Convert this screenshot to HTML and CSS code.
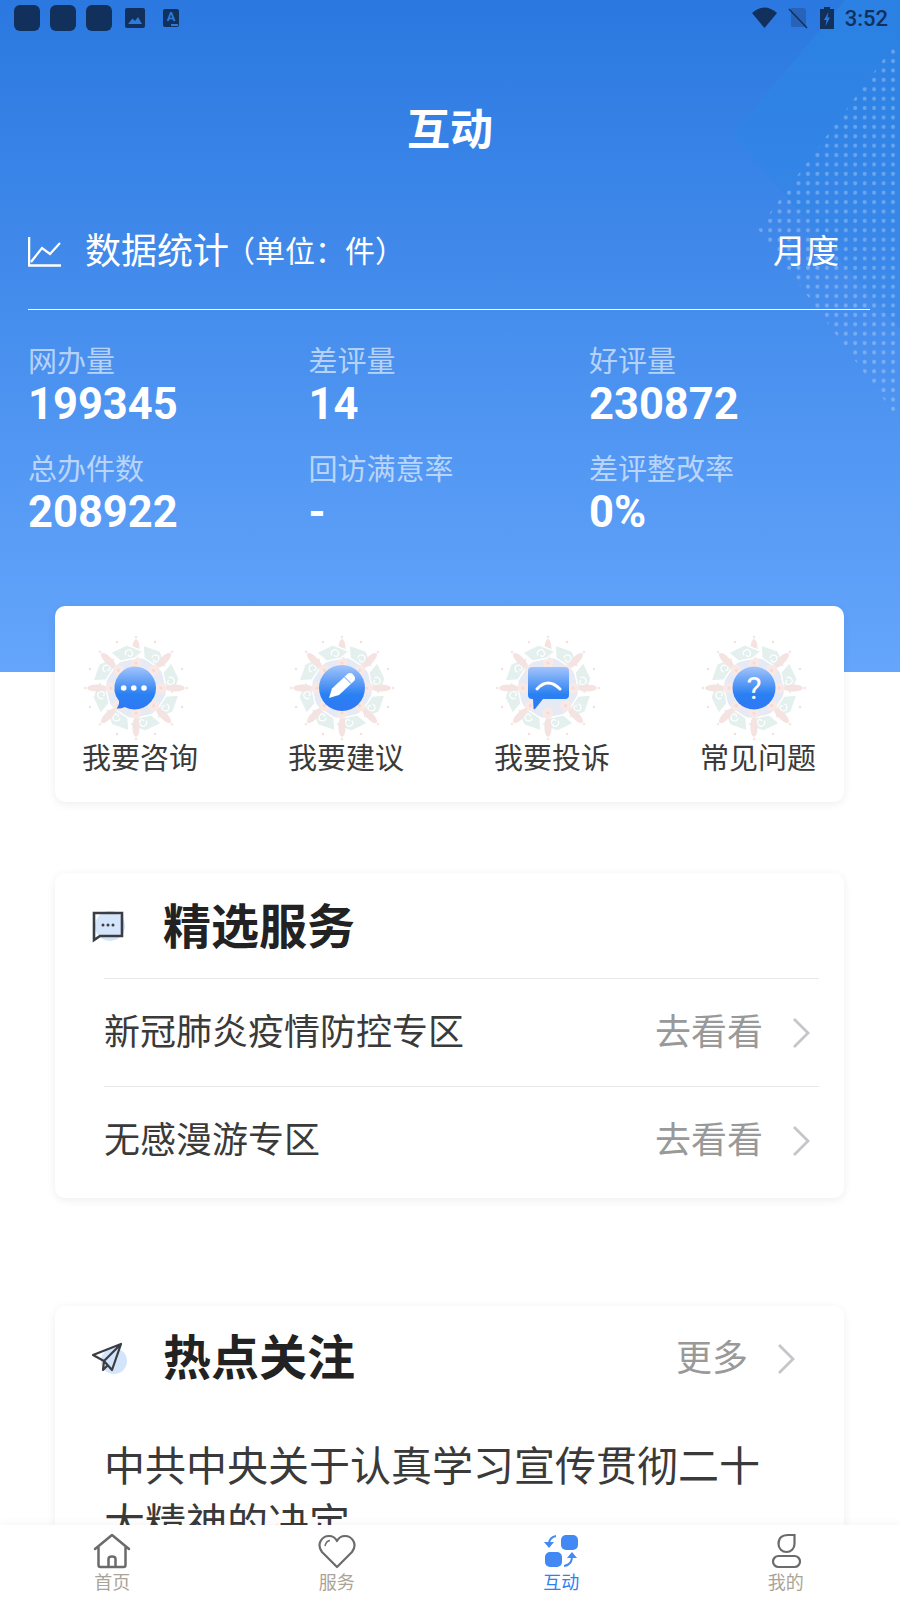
FILE: index.html
```html
<!DOCTYPE html>
<html>
<head>
  <meta charset="utf-8">
  <title>互动</title>
  <link rel="stylesheet" href="styles.css">
</head>
<body>
  <div class="app">
    <div class="content">
      <div class="header">
        <svg class="header-bg" width="900" height="672" viewBox="0 0 900 672">
          <defs>
            <pattern id="dots" width="9.45" height="9.4" patternUnits="userSpaceOnUse">
              <circle cx="4.7" cy="4.7" r="2" fill="#fff" fill-opacity=".27"/>
            </pattern>
            <linearGradient id="shape" x1="0" y1="0" x2="0" y2="1">
              <stop offset="0" stop-color="#2b86e4" stop-opacity=".7"/>
              <stop offset="1" stop-color="#2f86e8" stop-opacity=".3"/>
            </linearGradient>
          </defs>
          <path d="M736 130 L850 -6 L900 -6 L900 330 L736 138 Q733 134 736 130 Z" fill="url(#shape)"/>
          <polygon points="758,229 905,30 905,428" fill="url(#dots)"/>
        </svg>

        <div class="status-bar">
          <div class="status-left">
            <span class="app-dot"></span>
            <span class="app-dot"></span>
            <span class="app-dot"></span>
            <svg class="ic-image" width="20" height="20" viewBox="0 0 20 20">
              <rect width="20" height="20" rx="2" fill="#12305c"/>
              <path d="M3 16 L7.5 10.5 L10 13 L13 9 L17 16 Z" fill="#2b7ae0"/>
            </svg>
            <span class="ic-letter">A</span>
          </div>
          <div class="status-right">
            <svg width="27" height="22" viewBox="0 0 27 22">
              <path d="M1 6 Q13.5 -5 26 6 L13.5 21 Z" fill="#12305c"/>
            </svg>
            <svg class="ic-sim" width="20" height="22" viewBox="0 0 20 22">
              <path d="M3 1 H15 Q18 1 18 4 V20 H4 Q3 20 3 19 Z" fill="#2863ba"/>
              <path d="M1 2 L19 21" stroke="#12305c" stroke-width="1.5"/>
            </svg>
            <svg class="ic-battery" width="14" height="22" viewBox="0 0 14 22">
              <path d="M4 2 V0 H10 V2 H14 V22 H0 V2 Z" fill="#12305c"/>
              <path d="M8.5 5 L4 13 H6.5 L5.5 19 L10 10.5 H7.5 Z" fill="#2b7ae0"/>
            </svg>
            <span class="time">3:52</span>
          </div>
        </div>

        <h1 class="page-title">互动</h1>

        <div class="stat-head">
          <svg class="ic-chart" width="33" height="30" viewBox="0 0 33 30">
            <path d="M1 0 V28.5 H33" fill="none" stroke="#fff" stroke-width="2.5"/>
            <path d="M3 25 L14 11 L22 17 L32 6" fill="none" stroke="#fff" stroke-width="2.2"/>
          </svg>
          <span class="stat-title">数据统计</span>
          <span class="stat-unit">（单位：件）</span>
          <span class="stat-period">月度</span>
        </div>

        <div class="stat-grid">
          <div class="stat">
            <div class="stat-label">网办量</div>
            <div class="stat-value">199345</div>
          </div>
          <div class="stat">
            <div class="stat-label">差评量</div>
            <div class="stat-value">14</div>
          </div>
          <div class="stat">
            <div class="stat-label">好评量</div>
            <div class="stat-value">230872</div>
          </div>
          <div class="stat">
            <div class="stat-label">总办件数</div>
            <div class="stat-value">208922</div>
          </div>
          <div class="stat">
            <div class="stat-label">回访满意率</div>
            <div class="stat-value">-</div>
          </div>
          <div class="stat">
            <div class="stat-label">差评整改率</div>
            <div class="stat-value">0%</div>
          </div>
        </div>
      </div>

      <div class="card quick-card">
        <div class="quick-item">
          <svg class="quick-icon" width="106" height="106" viewBox="0 0 106 106">
            <defs>
              <linearGradient id="blue" x1="0" y1="0" x2="0" y2="1">
                <stop offset="0" stop-color="#a3c4fb"/>
                <stop offset=".65" stop-color="#2a80f2"/>
                <stop offset="1" stop-color="#2f78f5"/>
              </linearGradient>
              <g id="unit">
                <path d="M60 10 L77 16 L84 32 L73 31 L61 23 Z" fill="#e4f0ee" stroke="#fff" stroke-width="1.4"/>
                <path d="M69 23 a3.500 3.500 0 1 1 3 4 a2 2 0 0 1 -1 -3" fill="none" stroke="#fff" stroke-width="1.200"/>
                <ellipse cx="53" cy="14" rx="3.600" ry="10" fill="#f4e3e0"/>
                <circle cx="53" cy="2" r="1.300" fill="#f3e5e3"/>
                <circle cx="53" cy="28" r="5.500" fill="#f8e9e6"/>
                <circle cx="53" cy="28" r="1.500" fill="#f2dad6"/>
                <circle cx="72" cy="7" r="1.200" fill="#f7dedb"/>
              </g>
              <g id="mandala">
                <circle cx="53" cy="53" r="30" fill="#e6eaf5"/>
                <use href="#unit"/>
                <use href="#unit" transform="rotate(45 53 53)"/>
                <use href="#unit" transform="rotate(90 53 53)"/>
                <use href="#unit" transform="rotate(135 53 53)"/>
                <use href="#unit" transform="rotate(180 53 53)"/>
                <use href="#unit" transform="rotate(225 53 53)"/>
                <use href="#unit" transform="rotate(270 53 53)"/>
                <use href="#unit" transform="rotate(315 53 53)"/>
              </g>
            </defs>
            <use href="#mandala"/>
            <path d="M50.500 31.500 A21.5 21.5 0 1 1 41.500 72 Q38.500 74 33.500 73.500 Q36.500 70 36 66 A21.5 21.5 0 0 1 50.500 31.500 Z" fill="url(#blue)"/>
            <circle cx="40.700" cy="53" r="2.8" fill="#fff"/>
            <circle cx="50.800" cy="53" r="2.8" fill="#fff"/>
            <circle cx="61" cy="53" r="2.8" fill="#fff"/>
          </svg>
          <span class="quick-label">我要咨询</span>
        </div>
        <div class="quick-item">
          <svg class="quick-icon" width="106" height="106" viewBox="0 0 106 106">
            <use href="#mandala"/>
            <circle cx="53" cy="53" r="23" fill="url(#blue)"/>
            <path d="M40 63 L43 53.5 L58 39.5 Q61 37 63.5 39 L65.5 41.5 Q67 44 64.5 46.5 L50 60 Z" fill="#fff"/>
            <path d="M55.5 42 L62 48.5" stroke="#5d9cf5" stroke-width="1"/>
          </svg>
          <span class="quick-label">我要建议</span>
        </div>
        <div class="quick-item">
          <svg class="quick-icon" width="106" height="106" viewBox="0 0 106 106">
            <use href="#mandala"/>
            <path d="M37 32 H70 Q74 32 74 36 V60 Q74 64 70 64 H48 L40 74 Q38.500 75 38.500 73 L38 64 H37 Q33 64 33 60 V36 Q33 32 37 32 Z" fill="url(#blue)"/>
            <path d="M42 54 Q53 42 65 54" fill="none" stroke="#fff" stroke-width="3" stroke-linecap="round"/>
          </svg>
          <span class="quick-label">我要投诉</span>
        </div>
        <div class="quick-item">
          <svg class="quick-icon" width="106" height="106" viewBox="0 0 106 106">
            <use href="#mandala"/>
            <circle cx="53" cy="53" r="21.500" fill="url(#blue)"/>
            <text class="question" x="53" y="64" text-anchor="middle">?</text>
          </svg>
          <span class="quick-label">常见问题</span>
        </div>
      </div>

      <div class="card service-card">
        <div class="card-head">
          <svg class="head-icon" width="36" height="36" viewBox="0 0 36 36">
            <circle cx="18" cy="16" r="15" fill="#d3e4fb"/>
            <path d="M2 3 H30 V26 H8 L2 30 Z" fill="none" stroke="#3a3d42" stroke-width="2.6"/>
            <circle cx="11" cy="15" r="1.500" fill="#3a3d42"/>
            <circle cx="16" cy="15" r="1.500" fill="#3a3d42"/>
            <circle cx="21" cy="15" r="1.500" fill="#3a3d42"/>
          </svg>
          <h2 class="card-title">精选服务</h2>
        </div>
        <div class="service-row">
          <span class="service-name">新冠肺炎疫情防控专区</span>
          <span class="service-link">去看看</span>
          <svg class="chevron" width="18" height="32" viewBox="0 0 18 32">
            <path d="M2 2 L16 16 L2 30" fill="none" stroke="#c6c6ca" stroke-width="2.800"/>
          </svg>
        </div>
        <div class="service-row">
          <span class="service-name">无感漫游专区</span>
          <span class="service-link">去看看</span>
          <svg class="chevron" width="18" height="32" viewBox="0 0 18 32">
            <path d="M2 2 L16 16 L2 30" fill="none" stroke="#c6c6ca" stroke-width="2.800"/>
          </svg>
        </div>
      </div>

      <div class="card news-card">
        <div class="card-head news-head">
          <svg class="head-icon" width="36" height="36" viewBox="0 0 36 36">
            <circle cx="22" cy="20" r="13" fill="#d3e4fb"/>
            <path d="M1 14 L29 3 L20 29 L12 20 Z M29 3 L12 20 L11 29 L16 24" fill="none" stroke="#3a3d42" stroke-width="2.200" stroke-linejoin="round"/>
          </svg>
          <h2 class="card-title">热点关注</h2>
          <span class="more">更多</span>
          <svg class="chevron" width="18" height="32" viewBox="0 0 18 32">
            <path d="M2 2 L16 16 L2 30" fill="none" stroke="#c6c6ca" stroke-width="2.800"/>
          </svg>
        </div>
        <p class="news-text">中共中央关于认真学习宣传贯彻二十大精神的决定</p>
      </div>
    </div>

    <div class="tabbar">
      <div class="tab">
        <svg width="40" height="36" viewBox="0 0 40 36">
          <path d="M3 16 L20 2 L37 16 M6.500 14 V32 Q6.500 34 8.500 34 H31.500 Q33.500 34 33.500 32 V14" fill="none" stroke="#6b6b6b" stroke-width="2.500" stroke-linecap="round" stroke-linejoin="round"/>
          <path d="M16.500 34 V26 Q16.500 23.500 20 23.500 Q23.500 23.500 23.500 26 V34" fill="none" stroke="#6b6b6b" stroke-width="2.500"/>
        </svg>
        <span class="tab-label">首页</span>
      </div>
      <div class="tab">
        <svg width="40" height="36" viewBox="0 0 40 36">
          <path d="M20 34 L5 19 C-1 11 5 3 12 3 C16 3 18.500 5 20 8 C21.500 5 24 3 28 3 C35 3 41 11 35 19 Z" fill="none" stroke="#6b6b6b" stroke-width="2.200" stroke-linejoin="round"/>
          <path d="M8 13 Q9 8 13 7.500" fill="none" stroke="#6b6b6b" stroke-width="1.500"/>
        </svg>
        <span class="tab-label">服务</span>
      </div>
      <div class="tab tab-active">
        <svg width="40" height="36" viewBox="0 0 40 36">
          <rect x="20" y="2" width="17" height="15" rx="5" fill="#4289f5"/>
          <rect x="4" y="19" width="17" height="15" rx="5" fill="#4289f5"/>
          <path d="M15 3 Q9 4 8 10" fill="none" stroke="#4289f5" stroke-width="2"/>
          <path d="M3 9 H13 L8 15 Z" fill="#4289f5"/>
          <path d="M23 33 Q30 32 31 25" fill="none" stroke="#4289f5" stroke-width="2"/>
          <path d="M26 25 H36 L31 19 Z" fill="#4289f5"/>
        </svg>
        <span class="tab-label">互动</span>
      </div>
      <div class="tab">
        <svg width="40" height="36" viewBox="0 0 40 36">
          <path d="M28.500 2 V11 A8 8 0 0 1 12.500 11 Q12.500 2 22 2 Z" fill="none" stroke="#6b6b6b" stroke-width="2.200"/>
          <rect x="7" y="23" width="27" height="11" rx="5.500" fill="none" stroke="#6b6b6b" stroke-width="2.200"/>
        </svg>
        <span class="tab-label">我的</span>
      </div>
    </div>
  </div>
</body>
</html>
```

FILE: styles.css
```css
* {
  box-sizing: border-box;
}

body {
  margin: 0;
  font-family: Roboto, "Noto Sans CJK SC", sans-serif;
  background-color: #fff;
}

.app {
  display: flex;
  flex-direction: column;
  height: 1600px;
  overflow: hidden;
}

.content {
  flex: 1;
  min-height: 0;
  overflow: hidden;
}

/* header */
.header {
  position: relative;
  height: 672px;
  color: #fff;
  background: linear-gradient(180deg, #2a78e0 0%, #65a6fc 100%);
}

.header-bg {
  position: absolute;
  top: 0;
  left: 0;
}

.status-bar,
.page-title,
.stat-head,
.stat-grid {
  position: relative;
}

.status-bar {
  display: flex;
  justify-content: space-between;
  align-items: center;
  height: 36px;
  padding: 0 12px 0 14px;
}

.status-left,
.status-right {
  display: flex;
  align-items: center;
}

.app-dot {
  width: 26px;
  height: 26px;
  margin-right: 10px;
  border-radius: 6px;
  background-color: #12305c;
}

.ic-image {
  margin-left: 3px;
}

.ic-letter {
  position: relative;
  display: flex;
  justify-content: center;
  width: 16px;
  height: 18px;
  margin-left: 18px;
  border-radius: 2px;
  font-size: 13px;
  font-weight: 700;
  line-height: 15px;
  color: #2b7ae0;
  background-color: #12305c;
}

.ic-letter::after {
  content: "";
  position: absolute;
  right: 1px;
  bottom: 1px;
  width: 7px;
  height: 2px;
  background-color: #2b7ae0;
}

.ic-sim {
  margin-left: 10px;
}

.ic-battery {
  margin-left: 12px;
}

.time {
  margin-left: 11px;
  font-size: 22px;
  font-weight: 500;
  color: #12305c;
}

.page-title {
  margin: 70px 0 0;
  font-size: 43px;
  font-weight: 700;
  line-height: 48px;
  text-align: center;
}

.stat-head {
  display: flex;
  align-items: center;
  height: 79px;
  margin: 77px 30px 0 28px;
  padding-bottom: 36px;
  border-bottom: 1px solid #fff;
}

.ic-chart {
  flex-shrink: 0;
}

.stat-title {
  margin-left: 24px;
  font-size: 36px;
  line-height: 40px;
}

.stat-unit {
  margin-left: -4px;
  font-size: 30px;
  line-height: 40px;
}

.stat-period {
  margin-left: auto;
  margin-right: 31px;
  font-size: 33px;
  line-height: 40px;
}

.stat-grid {
  display: grid;
  grid-template-columns: repeat(3, 280.5px);
  row-gap: 22px;
  margin: 34px 0 0 28px;
}

.stat-label {
  font-size: 29px;
  line-height: 36px;
  color: rgba(255, 255, 255, 0.6);
}

.stat-value {
  font-size: 43.5px;
  font-weight: 700;
  line-height: 50px;
}

/* cards */
.card {
  position: relative;
  margin: 0 56px 0 55px;
  border-radius: 10px;
  background-color: #fff;
  box-shadow: 0 2px 10px rgba(0, 0, 0, 0.07);
}

.quick-card {
  display: flex;
  justify-content: space-between;
  height: 196px;
  margin-top: -66px;
  padding: 29px 28px 0 27px;
}

.quick-item {
  display: flex;
  flex-direction: column;
  align-items: flex-start;
  width: 116px;
}

.quick-icon {
  margin-left: 1px;
}

.quick-label {
  margin-top: -2px;
  font-size: 29px;
  line-height: 40px;
  white-space: nowrap;
  color: #3a3a3a;
}

.question {
  font-family: Roboto, sans-serif;
  font-size: 32px;
  font-weight: 400;
  fill: #fff;
}

.service-card {
  height: 325px;
  margin-top: 71px;
}

.news-card {
  height: 320px;
  margin-top: 108px;
}

.card-head {
  display: flex;
  align-items: center;
  height: 105px;
  padding: 4px 0 0 37px;
}

.head-icon {
  flex-shrink: 0;
  margin-right: 35px;
}

.card-title {
  margin: 0;
  font-size: 48px;
  font-weight: 700;
  line-height: 60px;
  color: #222;
}

.service-row {
  display: flex;
  align-items: center;
  height: 108px;
  margin: 0 25px 0 49px;
  padding-right: 9px;
  border-top: 1px solid #e8e8ea;
}

.service-name {
  flex: 1;
  font-size: 36px;
  line-height: 48px;
  color: #3a3a3a;
}

.service-link {
  font-size: 36px;
  line-height: 48px;
  color: #999;
}

.service-row .chevron {
  margin-left: 29px;
}

.news-head {
  padding-top: 1px;
  padding-right: 49px;
}

.more {
  margin-left: auto;
  font-size: 36px;
  line-height: 48px;
  color: #999;
}

.news-head .chevron {
  margin-left: 29px;
}

.news-text {
  width: 670px;
  margin: 28px 0 0 49px;
  font-size: 41px;
  line-height: 57px;
  color: #3a3a3a;
}

/* bottom tabs */
.tabbar {
  position: relative;
  display: grid;
  grid-template-columns: repeat(4, 1fr);
  flex-shrink: 0;
  height: 75px;
  padding: 8px 2px 0 0;
  background-color: #fff;
  box-shadow: 0 -3px 8px rgba(0, 0, 0, 0.03);
}

.tab {
  display: flex;
  flex-direction: column;
  align-items: center;
}

.tab-label {
  margin-top: 2px;
  font-size: 18px;
  line-height: 24px;
  color: #aaa398;
}

.tab-active .tab-label {
  color: #2f80f5;
}
```
